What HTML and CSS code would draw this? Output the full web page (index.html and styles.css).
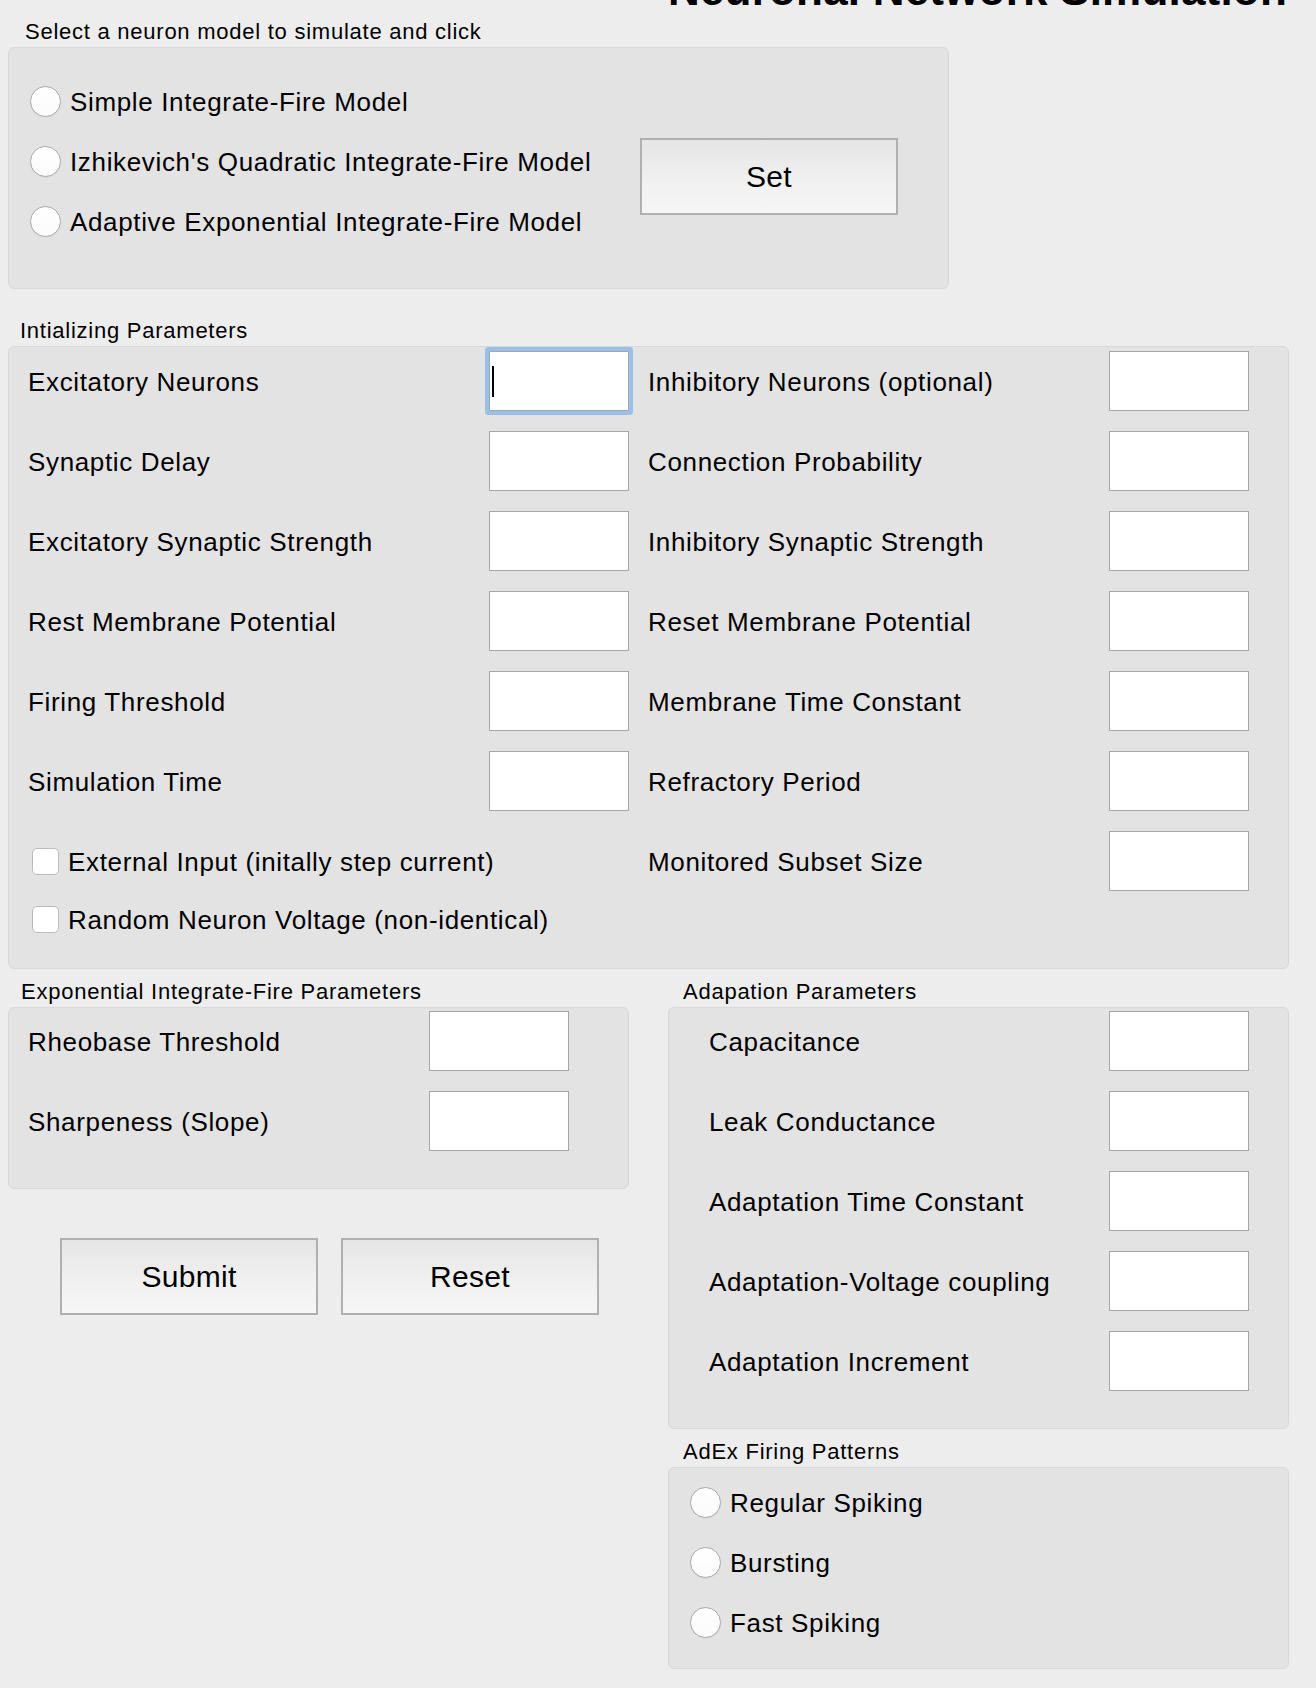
FILE: index.html
```html
<!DOCTYPE html>
<html lang="en">
<head>
<meta charset="utf-8">
<title>Neuronal Network Simulation</title>
<link rel="stylesheet" href="styles.css">
</head>
<body>
<div class="app">
  <div class="title">Neuronal Network Simulation</div>

  <div class="legend legend-select">Select a neuron model to simulate and click</div>
  <div class="panel model-panel">
    <div class="radio-group">
      <div class="radio-row"><span class="radio"></span><span class="txt">Simple Integrate-Fire Model</span></div>
      <div class="radio-row"><span class="radio"></span><span class="txt">Izhikevich's Quadratic Integrate-Fire Model</span></div>
      <div class="radio-row"><span class="radio"></span><span class="txt">Adaptive Exponential Integrate-Fire Model</span></div>
    </div>
    <button class="btn set-btn" type="button">Set</button>
  </div>

  <div class="legend legend-init">Intializing Parameters</div>
  <div class="panel init-panel">
    <div class="init-grid">
      <div class="lbl">Excitatory Neurons</div>
      <div class="field focused"><span class="caret"></span></div>
      <div class="lbl r">Inhibitory Neurons (optional)</div>
      <div class="field"></div>

      <div class="lbl">Synaptic Delay</div>
      <div class="field"></div>
      <div class="lbl r">Connection Probability</div>
      <div class="field"></div>

      <div class="lbl">Excitatory Synaptic Strength</div>
      <div class="field"></div>
      <div class="lbl r">Inhibitory Synaptic Strength</div>
      <div class="field"></div>

      <div class="lbl">Rest Membrane Potential</div>
      <div class="field"></div>
      <div class="lbl r">Reset Membrane Potential</div>
      <div class="field"></div>

      <div class="lbl">Firing Threshold</div>
      <div class="field"></div>
      <div class="lbl r">Membrane Time Constant</div>
      <div class="field"></div>

      <div class="lbl">Simulation Time</div>
      <div class="field"></div>
      <div class="lbl r">Refractory Period</div>
      <div class="field"></div>

      <div class="check-row span2"><span class="check"></span><span class="txt">External Input (initally step current)</span></div>
      <div class="lbl r">Monitored Subset Size</div>
      <div class="field"></div>
    </div>
    <div class="check-row extra"><span class="check"></span><span class="txt">Random Neuron Voltage (non-identical)</span></div>
  </div>

  <div class="lower">
    <div class="col">
      <div class="legend legend-exp">Exponential Integrate-Fire Parameters</div>
      <div class="panel exp-panel">
        <div class="lbl">Rheobase Threshold</div>
        <div class="field"></div>
        <div class="lbl">Sharpeness (Slope)</div>
        <div class="field"></div>
      </div>
      <div class="btn-row">
        <button class="btn" type="button">Submit</button>
        <button class="btn" type="button">Reset</button>
      </div>
    </div>
    <div class="col">
      <div class="legend legend-right">Adapation Parameters</div>
      <div class="panel adapt-panel">
        <div class="lbl">Capacitance</div>
        <div class="field"></div>
        <div class="lbl">Leak Conductance</div>
        <div class="field"></div>
        <div class="lbl">Adaptation Time Constant</div>
        <div class="field"></div>
        <div class="lbl">Adaptation-Voltage coupling</div>
        <div class="field"></div>
        <div class="lbl">Adaptation Increment</div>
        <div class="field"></div>
      </div>
      <div class="legend legend-right">AdEx Firing Patterns</div>
      <div class="panel adex-panel">
        <div class="radio-row"><span class="radio"></span><span class="txt">Regular Spiking</span></div>
        <div class="radio-row"><span class="radio"></span><span class="txt">Bursting</span></div>
        <div class="radio-row"><span class="radio"></span><span class="txt">Fast Spiking</span></div>
      </div>
    </div>
  </div>
</div>
</body>
</html>
```

FILE: styles.css
```css
html, body {
  margin: 0;
  padding: 0;
  background: #ededed;
}

body {
  font-family: "Liberation Sans", Arial, Helvetica, sans-serif;
  color: #000;
}

.app {
  display: flow-root;
  padding-left: 8px;
  width: 1281px;
}

.title {
  font-weight: bold;
  font-size: 44px;
  line-height: 44px;
  height: 44px;
  margin-top: -32px;
  text-align: right;
  padding-right: 2px;
  white-space: nowrap;
  letter-spacing: 0.2px;
}

.legend {
  font-size: 22px;
  line-height: 24px;
  height: 24px;
  letter-spacing: 0.75px;
  margin-bottom: 3px;
  white-space: nowrap;
  margin-top: 11px;
  padding-left: 13px;
}

.legend-select {
  margin-top: 8px;
  padding-left: 17px;
}

.legend-init {
  margin-top: 30px;
  padding-left: 12px;
}

.legend-right {
  padding-left: 15px;
}

.panel {
  box-sizing: border-box;
  background: #e3e3e3;
  border: 1px solid #d8d8d8;
  border-radius: 6px;
}

.txt, .lbl {
  font-size: 26px;
  letter-spacing: 0.65px;
  white-space: nowrap;
  padding-top: 2px;
}

.lbl {
  display: flex;
  align-items: center;
  box-sizing: border-box;
  padding-left: 1px;
}

.lbl.r {
  padding-left: 19px;
}

/* model panel */
.model-panel {
  width: 941px;
  height: 242px;
  display: grid;
  grid-template-columns: 631px 258px;
  align-items: start;
}

.radio-group {
  display: flex;
  flex-direction: column;
  gap: 29px;
  padding: 38px 0 0 21px;
}

.radio-row {
  display: flex;
  align-items: center;
  gap: 9px;
  height: 31px;
}

.radio {
  box-sizing: border-box;
  width: 31px;
  height: 31px;
  flex: none;
  border-radius: 50%;
  border: 1px solid #ababab;
  background: linear-gradient(#ffffff, #fbfbfb);
  box-shadow: 0 0.5px 1px rgba(0, 0, 0, 0.08);
}

.set-btn {
  margin-top: 90px;
}

.btn {
  box-sizing: border-box;
  width: 258px;
  height: 77px;
  border: 2px solid #b0b0b0;
  border-radius: 0;
  background: linear-gradient(#e5e5e5, #f1f1f1 60%, #f6f6f6);
  font-family: inherit;
  font-size: 30px;
  letter-spacing: 0.3px;
  color: #000;
  padding: 0;
}

/* init panel */
.init-panel {
  height: 623px;
  padding: 4px 0 0 18px;
}

.init-grid {
  display: grid;
  grid-template-columns: 462px 140px 480px 140px;
  grid-template-rows: repeat(7, 60px);
  row-gap: 20px;
}

.field {
  box-sizing: border-box;
  width: 140px;
  height: 60px;
  background: #fff;
  border: 1px solid #a6a6a6;
}

.field.focused {
  display: flex;
  align-items: center;
  padding-left: 2px;
  border-radius: 1px;
  box-shadow: 0 0 0 4px #98c0eb;
}

.caret {
  width: 2px;
  height: 31px;
  background: #000;
}

.check-row {
  display: flex;
  align-items: center;
  gap: 9px;
  padding-left: 5px;
}

.check-row.span2 {
  grid-column: 1 / span 2;
}

.check-row.extra {
  margin-top: 15px;
  height: 27px;
}

.check {
  box-sizing: border-box;
  width: 27px;
  height: 27px;
  flex: none;
  border-radius: 5px;
  border: 1px solid #bcbcbc;
  background: #fff;
}

/* lower area */
.lower {
  display: flex;
  gap: 39px;
}

.col {
  width: 621px;
}

.exp-panel {
  height: 182px;
  padding: 3px 0 0 18px;
  display: grid;
  grid-template-columns: 402px 140px;
  grid-template-rows: repeat(2, 60px);
  row-gap: 20px;
}

.btn-row {
  display: flex;
  gap: 23px;
  margin-top: 49px;
  padding-left: 52px;
}

.adapt-panel {
  height: 422px;
  padding: 3px 0 0 39px;
  display: grid;
  grid-template-columns: 401px 140px;
  grid-template-rows: repeat(5, 60px);
  row-gap: 20px;
}

.adex-panel {
  height: 202px;
  padding: 19px 0 0 21px;
  display: flex;
  flex-direction: column;
  gap: 29px;
}
```
